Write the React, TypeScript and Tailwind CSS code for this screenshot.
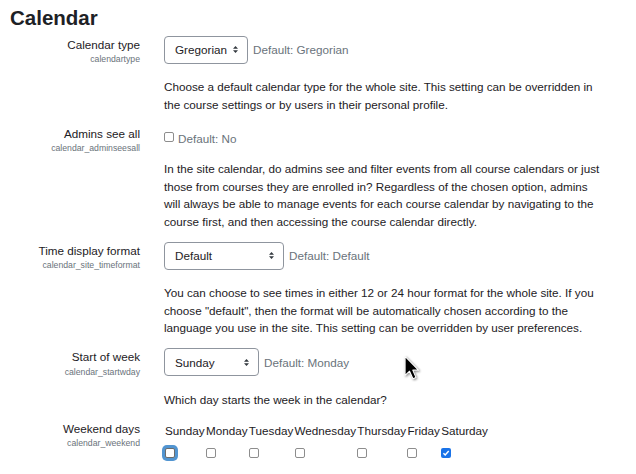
import React from "react";

const Arrow = () => (
  <svg width="5" height="7" viewBox="0 0 4 5" className="shrink-0" preserveAspectRatio="none">
    <path d="M2 0L0 2h4zm0 5L0 3h4z" fill="#343a40" />
  </svg>
);

function Select({ value, className }: { value: string; className: string }) {
  return (
    <div
      className={
        "flex items-center justify-between h-[28px] border border-[#8f959e] rounded-[4px] pl-[10px] pr-[9px] text-[#1d2125] shrink-0 " +
        className
      }
    >
      <span>{value}</span>
      <Arrow />
    </div>
  );
}

function Box({ checked = false, focus = false }: { checked?: boolean; focus?: boolean }) {
  if (checked) {
    return (
      <div className="w-[10px] h-[10px] rounded-[2px] bg-[#1a73e8] flex items-center justify-center">
        <svg width="8" height="8" viewBox="0 0 10 10">
          <path d="M1.8 5.2 L4 7.4 L8.4 2.4" stroke="white" strokeWidth="1.8" fill="none" />
        </svg>
      </div>
    );
  }
  return (
    <div
      className={
        focus
          ? "w-[10px] h-[10px] rounded-[2px] border border-[#6b6b6b] bg-white shadow-[0_0_0_3px_rgba(15,108,191,0.72)]"
          : "w-[10px] h-[10px] rounded-[2px] border border-[#8d8d8d] bg-white"
      }
    />
  );
}

function Label({ title, name }: { title: string; name: string }) {
  return (
    <div className="w-[140px] shrink-0 text-right">
      <div className="text-[11.7px] leading-[17.5px] text-[#1d2125]">{title}</div>
      <div className="text-[8.7px] leading-[13px] text-[#6a737b]">{name}</div>
    </div>
  );
}

const days = [
  { d: "Sunday", focus: true },
  { d: "Monday" },
  { d: "Tuesday" },
  { d: "Wednesday" },
  { d: "Thursday" },
  { d: "Friday" },
  { d: "Saturday", checked: true },
];

export default function App() {
  return (
    <div
      className="relative w-[636px] h-[474px] overflow-hidden bg-white text-[#1d2125] text-[11.7px] leading-[17.5px]"
      style={{ fontFamily: '"Liberation Sans", Arial, sans-serif' }}
    >
      <h2 className="ml-[10px] mt-[6px] text-[20.5px] leading-[24.6px] font-bold">Calendar</h2>

      {/* Calendar type */}
      <div className="flex mt-[5.4px]">
        <Label title="Calendar type" name="calendartype" />
        <div className="ml-[24px] w-[442px]">
          <div className="flex items-center h-[28px]">
            <Select value="Gregorian" className="w-[84px]" />
            <span className="ml-[5px] text-[#6a737b]">Default: Gregorian</span>
          </div>
          <div className="mt-[14.5px]">
            Choose a default calendar type for the whole site. This setting can be overridden in the course
            settings or by users in their personal profile.
          </div>
        </div>
      </div>

      {/* Admins see all */}
      <div className="flex mt-[11.5px]">
        <Label title="Admins see all" name="calendar_adminseesall" />
        <div className="ml-[24px] w-[442px]">
          <div className="flex items-start h-[21px] pt-[4.6px]">
            <div className="mt-[2.4px]">
              <Box />
            </div>
            <span className="ml-[4px] text-[#6a737b]">Default: No</span>
          </div>
          <div className="mt-[14.5px]">
            In the site calendar, do admins see and filter events from all course calendars or just those from
            courses they are enrolled in? Regardless of the chosen option, admins will always be able to manage
            events for each course calendar by navigating to the course first, and then accessing the course
            calendar directly.
          </div>
        </div>
      </div>

      {/* Time display format */}
      <div className="flex mt-[11.5px]">
        <Label title="Time display format" name="calendar_site_timeformat" />
        <div className="ml-[24px] w-[442px]">
          <div className="flex items-center h-[28px]">
            <Select value="Default" className="w-[120px]" />
            <span className="ml-[5px] text-[#6a737b]">Default: Default</span>
          </div>
          <div className="mt-[14.5px]">
            You can choose to see times in either 12 or 24 hour format for the whole site. If you choose
            "default", then the format will be automatically chosen according to the language you use in the
            site. This setting can be overridden by user preferences.
          </div>
        </div>
      </div>

      {/* Start of week */}
      <div className="flex mt-[11.5px]">
        <Label title="Start of week" name="calendar_startwday" />
        <div className="ml-[24px] w-[442px]">
          <div className="flex items-center h-[28px]">
            <Select value="Sunday" className="w-[95px]" />
            <span className="ml-[5px] text-[#6a737b]">Default: Monday</span>
          </div>
          <div className="mt-[14.5px]">Which day starts the week in the calendar?</div>
        </div>
      </div>

      {/* Weekend days */}
      <div className="flex mt-[11.5px]">
        <Label title="Weekend days" name="calendar_weekend" />
        <div className="ml-[24px] w-[442px] pt-[1.6px]">
          <div className="flex gap-[1.3px] ml-[1px]">
            {days.map((x) => (
              <div key={x.d} className="flex flex-col items-start">
                <div>{x.d}</div>
                <div className="mt-[8.9px]">
                  <Box checked={!!x.checked} focus={!!x.focus} />
                </div>
              </div>
            ))}
          </div>
        </div>
      </div>

      {/* mouse cursor overlay */}
      <svg
        className="absolute left-[404px] top-[355px]"
        width="16"
        height="26"
        viewBox="-1 -1 15 24"
        style={{ filter: "drop-shadow(1px 1px 1px rgba(0,0,0,0.45))" }}
      >
        <path d="M0 0 L0 18 L4.2 14 L7.4 21 L10.2 19.8 L7.2 13 L12.6 13 Z" fill="#000" stroke="#fff" strokeWidth="1" strokeLinejoin="round" />
      </svg>
    </div>
  );
}
